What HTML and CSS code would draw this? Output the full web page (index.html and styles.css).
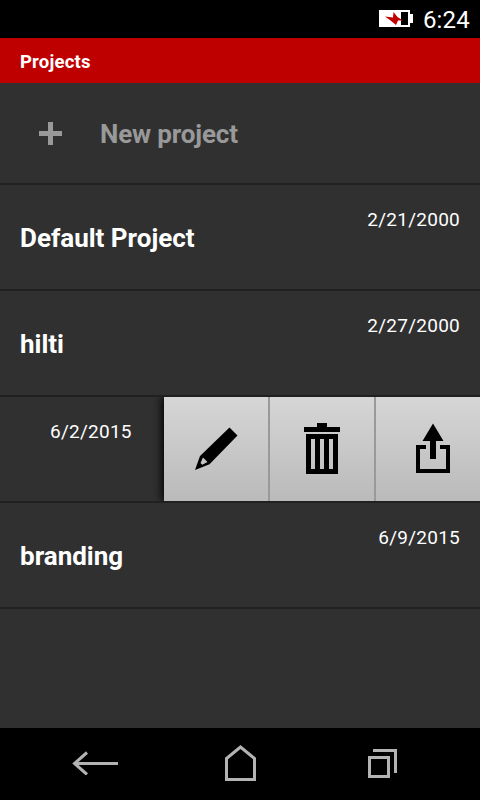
FILE: index.html
```html
<!DOCTYPE html>
<html lang="en">
<head>
    <meta charset="UTF-8">
    <meta name="viewport" content="width=device-width, initial-scale=1.0">
    <title>Projects</title>
    <link rel="stylesheet" href="styles.css">
</head>
<body>
    <div class="status-bar">
        <svg class="battery" width="34" height="17" viewBox="0 0 34 17">
            <path fill="#fff" d="M0 0h31v4h3v9h-3v4H0z"/>
            <path fill="#000" d="M22 2h7v13h-7z"/>
            <path fill="#c00000" d="M6 6.500L14 7.500 14.500 2 18.500 7 24 10.500H19L17 15 11.500 10.500z"/>
        </svg>
        <span class="clock">6:24</span>
    </div>

    <header>
        <h1>Projects</h1>
    </header>

    <main>
        <a class="new-project" href="#">
            <svg width="23" height="23" viewBox="0 0 23 23">
                <path fill="#999" d="M9 0h5v9h9v5h-9v9H9v-9H0V9h9z"/>
            </svg>
            <span>New project</span>
        </a>
        <ul class="project-list">
            <li class="project">
                <span class="name">Default Project</span>
                <span class="date">2/21/2000</span>
            </li>
            <li class="project">
                <span class="name">hilti</span>
                <span class="date">2/27/2000</span>
            </li>
            <li class="project open">
                <span class="date">6/2/2015</span>
                <div class="actions">
                    <button type="button" aria-label="Edit">
                        <svg width="104" height="104" viewBox="164 397 104 104">
                            <path fill-rule="evenodd" d="M195 470l5-14 29.500-28.500 8 8-28 28.800zM203 457.500l-2.500 5.500 1.800 1.800 5.200-2.800z"/>
                        </svg>
                    </button>
                    <button type="button" aria-label="Delete">
                        <svg width="104" height="104" viewBox="270 397 104 104">
                            <path d="M317 423h10v4h13v5h-36v-5h13z"/>
                            <path fill-rule="evenodd" d="M306 434h32v40h-32zM311 439v30h4v-30zM320 439v30h4v-30zM329 439v30h4v-30z"/>
                        </svg>
                    </button>
                    <button type="button" aria-label="Share">
                        <svg width="104" height="104" viewBox="376 397 104 104">
                            <path d="M433 423.500L443.500 441H436v18h-6v-18h-7.500z"/>
                            <path d="M426 445v4h-6v20h26v-20h-6v-4h10v28h-34v-28z"/>
                        </svg>
                    </button>
                </div>
            </li>
            <li class="project">
                <span class="name">branding</span>
                <span class="date">6/9/2015</span>
            </li>
        </ul>
    </main>

    <nav>
        <svg width="46" height="24" viewBox="0 0 46 24">
            <path d="M46 12.500H3M15 1.500L2.500 12.500 15 23.500"/>
        </svg>
        <svg class="home" width="31" height="36" viewBox="0 0 31 36">
            <path d="M1.500 34.500V13.500L15.500 2l14 11.500v21z"/>
        </svg>
        <svg width="29" height="30" viewBox="0 0 29 30">
            <path d="M1.500 9.500h19v19h-19zM5 2.500h22.500v22.500"/>
        </svg>
    </nav>
</body>
</html>
```

FILE: styles.css
```css
* {
    box-sizing: border-box;
}
body {
    margin: 0;
    height: 800px;
    display: flex;
    flex-direction: column;
    background-color: #303030;
    color: #fff;
    font-family: Roboto, sans-serif;
}
.status-bar {
    height: 38px;
    padding-right: 10px;
    display: flex;
    justify-content: flex-end;
    align-items: center;
    gap: 10px;
    background-color: #000;
}
.battery {
    margin-bottom: 2px;
}
.clock {
    font-size: 24px;
    line-height: 38px;
    padding-top: 2px;
    letter-spacing: 0.2px;
}
header {
    height: 45px;
    padding: 2px 20px 0;
    display: flex;
    align-items: center;
    background-color: #bf0000;
}
header h1 {
    margin: 0;
    font-size: 18.500px;
    line-height: 22px;
    font-weight: 700;
    letter-spacing: 0.2px;
}
main {
    flex: 1;
}
.new-project {
    height: 102px;
    padding-left: 39px;
    display: flex;
    align-items: center;
    gap: 38px;
    border-bottom: 2px solid #202020;
    color: #999;
    font-size: 26px;
    font-weight: 700;
    text-decoration: none;
}
.new-project span {
    padding-top: 2px;
    letter-spacing: -0.15px;
}
.project-list {
    margin: 0;
    padding: 0;
    list-style: none;
}
.project {
    height: 106px;
    padding: 0 20px;
    display: flex;
    justify-content: space-between;
    border-bottom: 2px solid #202020;
}
.name {
    font-size: 26px;
    font-weight: 700;
    line-height: 106px;
}
.date {
    padding-top: 23px;
    font-size: 19px;
    line-height: 24px;
    letter-spacing: 0.25px;
}
.project.open {
    padding: 0 0 0 50px;
}
.actions {
    display: flex;
    box-shadow: -2px 0 8px #000;
    clip-path: inset(0 0 0 -12px);
}
.actions button {
    width: 106px;
    height: 104px;
    padding: 0;
    border: none;
    border-right: 2px solid #999;
    background: linear-gradient(#d6d6d6, #bababa);
}
.actions button:last-child {
    width: 104px;
    border-right: none;
}
.actions svg {
    display: block;
}
nav {
    height: 72px;
    padding: 0 83px 2px 72px;
    display: flex;
    justify-content: space-between;
    align-items: center;
    background-color: #000;
}
nav .home {
    margin-right: 6px;
}
nav path {
    fill: none;
    stroke: #b3b3b3;
    stroke-width: 3;
}
```
